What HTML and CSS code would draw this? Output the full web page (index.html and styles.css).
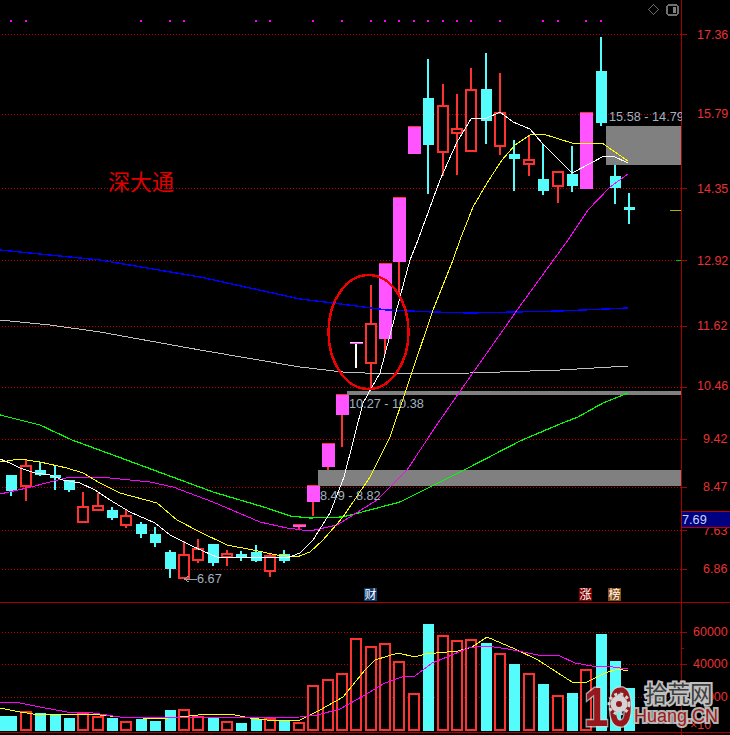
FILE: index.html
```html
<!DOCTYPE html>
<html lang="zh-CN">
<head>
<meta charset="utf-8">
<title>深大通</title>
<link rel="stylesheet" href="styles.css">
</head>
<body>
<svg class="chart" width="730" height="735" viewBox="0 0 730 735" xmlns="http://www.w3.org/2000/svg">
  <g class="sharp">
    <path class="dots" d="M10 21h2M25 21h2M140 21h2M169 21h2M183 21h2M255 21h2M269 21h2M312 21h2M341 21h2M370 21h2M384 21h2M398 21h2M413 21h2M427 21h2M442 21h2M456 21h2M470 21h2M499 21h2M542 21h2M557 21h2M585 21h2M600 21h2" />
    <path class="grid" d="M2 34.5H681M2 114.5H681M2 188.5H681M2 260.5H681M2 326.5H681M2 387.5H681M2 439.5H681M2 487.5H681M2 530.5H681M2 569.5H681M2 632.5H681M2 664.5H681M2 697.5H681"/>
    <path class="frame" d="M681.5 0V735M0 602.5H730M0 732.5H730M681 34.5h6M681 114.5h6M681 188.5h6M681 260.5h6M681 326.5h6M681 387.5h6M681 439.5h6M681 487.5h6M681 530.5h6M681 569.5h6M681 632.5h6M681 648.5h3M681 664.5h6M681 680.5h3M681 697.5h6M681 713.5h3"/>

    <path class="wick-red" d="M26 459V501M83 492V506M98 493V505M126 510V528M184 541V579M198 539V563M227 550V566M270 553V577M371 285V390M443 84V176M457 94V175M471 68V90M500 73V155M529 136V176M558 187V203M299 527V529M313 502V516M328 467V470M342 415V447M385 339V354M399 262V297"/>
    <path class="wick-cyan" d="M11 491V496M40 462V476M55 465V490M69 490V492M112 507V520M141 522V538M155 527V547M170 550V578M213 563V566M241 551V561M256 545V562M284 550V563M428 59V194M486 53V144M514 140V191M543 144V195M572 146V192M601 37V126M615 165V204M629 193V224"/>
    <path class="body-red" d="M21 466h10v20h-10zM78 507h10v15h-10zM93 506h10v4h-10zM121 516h10v9h-10zM179 555h10v23h-10zM193 549h10v11h-10zM222 554h10v3h-10zM265 556h10v15h-10zM366 324h10v39h-10zM438 106h10v46h-10zM452 129h10v4h-10zM466 90h10v61h-10zM495 113h10v33h-10zM524 160h10v4h-10zM553 172h10v14h-10z"/>
    <path class="body-cyan" d="M6 475h11v16h-11zM35 470h11v5h-11zM50 475h11v3h-11zM64 480h11v10h-11zM107 510h11v8h-11zM136 524h11v10h-11zM150 534h11v9h-11zM165 552h11v17h-11zM208 544h11v19h-11zM236 554h11v4h-11zM251 552h11v9h-11zM279 554h11v7h-11zM423 98h11v47h-11zM481 89h11v32h-11zM509 154h11v5h-11zM538 179h11v12h-11zM567 174h11v12h-11zM596 71h11v52h-11zM610 176h11v12h-11zM624 207h11v3h-11z"/>
    <path class="body-pink" d="M293 524h13v3h-13zM307 485h13v17h-13zM322 443h13v24h-13zM336 394h13v21h-13zM379 263h13v76h-13zM393 197h13v65h-13zM408 126h13v28h-13zM580 112h13v77h-13z"/>
    <path class="cap" d="M293 524.5h13M307 485.5h13M322 443.5h13M336 394.5h13M379 263.5h13M393 197.5h13M408 126.5h13M580 112.5h13"/>
    <path class="doji-top" d="M350 342.5h13"/>
    <path class="doji-bar" d="M350 343.5h13"/>
    <path class="doji-stem" d="M356 344V368"/>

    <path class="zone" d="M606 126h75v39h-75zM347 391h334v4h-334zM318 470h363v16h-363z"/>

    <polyline class="ma blue" points="0,250 100,260 200,277 300,299 333,303 387,310 433,312 470,313 560,311 628,308"/>
    <polyline class="ma silver" points="0,320 50,325 100,332 200,350 300,367 343,372 387,374 470,373 560,370 628,366"/>
    <polyline class="ma green" points="0,415 40,425 72,440 113,455 167,475 213,492 267,508 290,516 310,518 343,517 400,502 470,467 520,441 560,424 578,417 603,403 628,393"/>
    <polyline class="ma pink" points="0,494 27,488 50,482 70,477 100,477 150,482 173,487 213,502 260,522 287,528 310,531 337,525 377,500 407,470 438,423 470,377 520,306 568,240 588,210 610,187 628,174"/>
    <polyline class="ma yellow" points="0,462 20,459 40,462 67,468 83,473 100,483 120,493 157,503 177,520 200,532 227,545 253,550 277,555 297,557 310,552 323,540 343,517 370,477 390,437 407,387 433,310 453,260 460,240 473,207 487,183 502,160 515,145 530,135 543,134 572,143 602,143 628,161"/>
    <polyline class="ma white" points="0,459 10,463 20,468 35,473 50,475 63,480 80,483 95,490 110,500 130,512 155,523 170,535 190,545 205,552 217,557 240,557 267,557 287,558 300,553 313,540 330,513 344,477 363,403 380,373 400,297 410,260 418,240 440,180 457,142 471,119 487,118 500,112 513,122 530,129 542,143 557,158 572,173 593,162 602,157 613,156 628,163"/>

    <ellipse class="ring" cx="368.5" cy="332" rx="40" ry="57"/>
    <path class="arrow" d="M184 579h13M184 579l5-3M184 579l5 3"/>
  </g>

  <text class="note" x="108" y="190">深大通</text>
  <text class="range" x="609" y="121">15.58 - 14.79</text>
  <text class="range" x="349" y="408">10.27 - 10.38</text>
  <text class="range" x="320" y="500">8.49 - 8.82</text>
  <text class="range" x="197" y="583">6.67</text>
  <rect class="mask" x="682" y="105" width="10" height="20"/>

  <g class="axis">
    <text x="697" y="38.5">17.36</text>
    <text x="697" y="118">15.79</text>
    <text x="697" y="193">14.35</text>
    <text x="697" y="265">12.92</text>
    <text x="697" y="330">11.62</text>
    <text x="697" y="390">10.46</text>
    <text x="703" y="443">9.42</text>
    <text x="703" y="491">8.47</text>
    <text x="703" y="535">7.63</text>
    <text x="703" y="573">6.86</text>
    <text x="693" y="636">60000</text>
    <text x="693" y="668">40000</text>
    <text x="693" y="701">20000</text>
    <text x="690" y="729">×10</text>
  </g>

  <g class="sharp">
    <path class="tick-yellow" d="M670 210.5h11"/>
    <path class="tick-green" d="M676 260.5h5"/>
    <rect class="last-box" x="681.5" y="511.5" width="49" height="16"/>
  </g>
  <text class="last" x="682" y="524">7.69</text>

  <g class="sharp">
    <rect class="tag tag-cai" x="364" y="588" width="13" height="13"/>
    <rect class="tag tag-zhang" x="579" y="588" width="13" height="13"/>
    <rect class="tag tag-bang" x="608" y="588" width="13" height="13"/>
  </g>
  <text class="tag-text" x="364.5" y="599">财</text>
  <text class="tag-text" x="579.5" y="599">涨</text>
  <text class="tag-text" x="608.5" y="599">榜</text>

  <g class="sharp">
    <path class="vol-cyan" d="M-4 716h11v15h-11zM6 716h11v15h-11zM35 713h11v18h-11zM50 715h11v16h-11zM64 718h11v13h-11zM107 718h11v13h-11zM136 719h11v12h-11zM150 721h11v10h-11zM165 710h11v21h-11zM208 717h11v14h-11zM236 723h11v8h-11zM251 719h11v12h-11zM279 721h11v10h-11zM423 624h11v107h-11zM481 643h11v88h-11zM509 664h11v67h-11zM538 684h11v47h-11zM567 693h11v38h-11zM596 634h11v97h-11zM610 661h11v70h-11zM624 688h11v43h-11z"/>
    <path class="vol-red" d="M21 712h10v18h-10zM78 713h10v17h-10zM93 717h10v13h-10zM121 722h10v8h-10zM179 710h10v20h-10zM193 717h10v13h-10zM222 722h10v8h-10zM265 719h10v11h-10zM294 723h10v7h-10zM308 686h10v44h-10zM323 680h10v50h-10zM337 674h10v56h-10zM351 639h10v91h-10zM366 647h10v83h-10zM380 644h10v86h-10zM394 662h10v68h-10zM409 694h10v36h-10zM438 636h10v94h-10zM452 641h10v89h-10zM466 640h10v90h-10zM495 654h10v76h-10zM524 674h10v56h-10zM553 696h10v34h-10zM581 670h10v60h-10z"/>
    <polyline class="ma yellow" points="0,708 20,712 33,714 63,715 90,714 120,717 143,718 157,719 180,717 207,714 230,714 250,718 267,720 300,720 320,710 343,697 365,670 375,660 398,653 415,657 425,654 458,651 472,647 487,637 515,649 538,660 572,682 585,683 605,673 618,669 628,671"/>
    <polyline class="ma pink" points="0,702 20,703 40,707 67,712 93,713 120,717 220,717 250,718 300,717 317,715 340,709 365,695 385,683 402,677 415,676 432,663 452,655 468,648 487,646 508,649 538,655 560,656 575,663 592,666 605,666 628,669"/>
    <path class="diamond" d="M653.5 4.5l5 5-5 5-5-5z"/>
    <rect class="panel" x="667" y="5" width="11" height="10" rx="2"/>
    <rect class="panel-half" x="673" y="7" width="3" height="6"/>
  </g>

  <g class="logo">
    <text class="logo-num" transform="translate(584 726) scale(.78 1)">10</text>
    <circle class="gear" cx="619" cy="704" r="8.5"/>
    <circle class="gear-teeth" cx="619" cy="704" r="10"/>
    <circle class="gear-hub" cx="619" cy="704" r="3"/>
    <text class="logo-cn" x="645" y="702">拾荒网</text>
    <text class="logo-en" x="634" y="722">Huang.CN</text>
  </g>
</svg>
</body>
</html>
```

FILE: styles.css
```css
html, body {
  margin: 0;
  padding: 0;
  background: #000;
  overflow: hidden;
}

.chart {
  display: block;
  background: #000;
  font-family: "Liberation Sans", Arial, sans-serif;
}

.sharp { shape-rendering: crispEdges; }

.dots { fill: none; stroke: #ff00ff; stroke-width: 2; }
.grid { fill: none; stroke: #c00000; stroke-width: 1; stroke-dasharray: 1 2; }
.frame { fill: none; stroke: #a80000; stroke-width: 1; }

.wick-red { fill: none; stroke: #ff3232; stroke-width: 2; }
.wick-cyan { fill: none; stroke: #54fcfc; stroke-width: 2; }
.body-red { fill: #000; stroke: #ff3232; stroke-width: 2; }
.body-cyan { fill: #54fcfc; }
.body-pink { fill: #ff54ff; }
.cap { fill: none; stroke: #ff3232; stroke-width: 1; }

.doji-top { fill: none; stroke: #ffd8ff; stroke-width: 1; }
.doji-bar { fill: none; stroke: #ff40ff; stroke-width: 1; }
.doji-stem { fill: none; stroke: #fff; stroke-width: 2; }

.zone { fill: #808080; }

.ma { fill: none; stroke-width: 1; }
.blue { stroke: #0000ff; stroke-width: 1.4; }
.silver { stroke: #c0c0c0; }
.green { stroke: #00ff00; stroke-width: 1.2; }
.pink { stroke: #ff00ff; }
.yellow { stroke: #ffff00; }
.white { stroke: #ffffff; }

.ring { fill: none; stroke: #f00000; stroke-width: 2.5; }
.arrow { fill: none; stroke: #9aa0a8; stroke-width: 1; }

.note {
  font-family: "Noto Sans CJK SC", sans-serif;
  font-size: 22px;
  fill: #e00000;
}

.range {
  font-size: 12.7px;
  fill: #a4b2c0;
}

.mask { fill: #000; }

.axis text {
  font-size: 12.5px;
  fill: #e63232;
}

.tick-yellow { fill: none; stroke: #b0b000; stroke-width: 1; }
.tick-green { fill: none; stroke: #00c000; stroke-width: 1; }

.last-box { fill: #000080; stroke: #c00000; stroke-width: 1; }
.last { font-size: 12.7px; fill: #c8d4f0; }

.tag-cai { fill: #0f3c70; }
.tag-zhang { fill: #800000; }
.tag-bang { fill: #8a4a10; }
.tag-text {
  font-family: "Noto Sans CJK SC", sans-serif;
  font-size: 12px;
  fill: #fff;
}

.vol-cyan { fill: #54fcfc; }
.vol-red { fill: #000; stroke: #ff3232; stroke-width: 2; }

.diamond { fill: none; stroke: #6a6a6a; stroke-width: 1; }
.panel { fill: none; stroke: #707070; stroke-width: 1.4; }
.panel-half { fill: #808080; }

.logo-num {
  font-size: 56px;
  font-weight: bold;
  fill: #96181c;
  stroke: rgba(215, 215, 215, .75);
  stroke-width: 3px;
  paint-order: stroke;
}
.gear { fill: #d4d4d4; }
.gear-teeth {
  fill: none;
  stroke: #d4d4d4;
  stroke-width: 3;
  stroke-dasharray: 3 3;
}
.gear-hub { fill: #96181c; }
.logo-cn {
  font-family: "Noto Sans CJK SC", sans-serif;
  font-size: 22.5px;
  fill: #3c3c3c;
  stroke: rgba(205, 205, 205, .95);
  stroke-width: 4px;
  paint-order: stroke;
}
.logo-en {
  font-size: 18px;
  fill: #a01818;
  stroke: rgba(205, 205, 205, .9);
  stroke-width: 4px;
  paint-order: stroke;
}
```
